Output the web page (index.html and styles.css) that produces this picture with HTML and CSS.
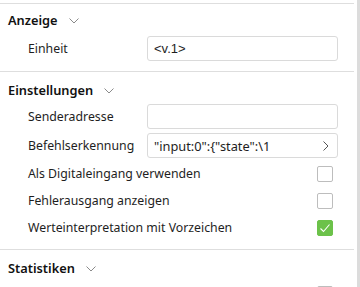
FILE: index.html
```html
<!DOCTYPE html>
<html>
<head>
<meta charset="utf-8">
<link rel="stylesheet" href="styles.css">
</head>
<body>
<div class="frame">
  <div class="panel">
    <section class="section first">
      <div class="head">Anzeige <svg class="chev" width="10" height="6" viewBox="0 0 10 6"><path d="M0.5 0.5 L5 5 L9.5 0.5" fill="none" stroke="#8a8a8a" stroke-width="1"/></svg></div>
      <div class="row field">
        <span class="label">Einheit</span>
        <div class="input mono">&lt;v.1&gt;</div>
      </div>
    </section>
    <section class="section">
      <div class="head">Einstellungen <svg class="chev" width="10" height="6" viewBox="0 0 10 6"><path d="M0.5 0.5 L5 5 L9.5 0.5" fill="none" stroke="#8a8a8a" stroke-width="1"/></svg></div>
      <div class="row field">
        <span class="label">Senderadresse</span>
        <div class="input"></div>
      </div>
      <div class="row field">
        <span class="label">Befehlserkennung</span>
        <div class="input arrow"><span class="val">"input:0":{"state":\1</span><svg width="6" height="10" viewBox="0 0 6 10"><path d="M0.5 0.5 L5 5 L0.5 9.5" fill="none" stroke="#555" stroke-width="1"/></svg></div>
      </div>
      <div class="row check">
        <span class="label">Als Digitaleingang verwenden</span>
        <span class="box"></span>
      </div>
      <div class="row check">
        <span class="label">Fehlerausgang anzeigen</span>
        <span class="box"></span>
      </div>
      <div class="row check">
        <span class="label">Werteinterpretation mit Vorzeichen</span>
        <span class="box on"><svg width="16" height="16" viewBox="0 0 16 16"><path d="M3.5 8.5 L6.5 11.5 L12.5 4.5" fill="none" stroke="#fff" stroke-width="1.1"/></svg></span>
      </div>
    </section>
    <section class="section">
      <div class="head">Statistiken <svg class="chev" width="10" height="6" viewBox="0 0 10 6"><path d="M0.5 0.5 L5 5 L9.5 0.5" fill="none" stroke="#8a8a8a" stroke-width="1"/></svg></div>
      <div class="row check">
        <span class="label"></span>
        <span class="box"></span>
      </div>
    </section>
  </div>
  <div class="scroll"></div>
</div>
</body>
</html>
```

FILE: styles.css
```css
html, body {
  margin: 0;
  padding: 0;
  background: #fff;
  overflow: hidden;
}
body {
  font-family: "Noto Sans", "Open Sans", sans-serif;
  font-size: 12.3px;
  color: #1e1e1e;
}
.frame {
  display: flex;
  height: 287px;
  overflow: hidden;
}
.panel {
  width: 357px;
  padding-top: 3px;
}
.scroll {
  width: 3px;
  background: #dcdcdc;
}
.section {
  border-top: 1px solid #dedede;
  padding-bottom: 8px;
  margin-right: 3px;
}
.head {
  display: flex;
  align-items: center;
  padding: 8px 0 2px 8px;
  height: 20px;
  font-weight: 600;
  font-size: 12.8px;
  color: #111;
}
.section.first .head {
  padding-top: 6px;
  padding-bottom: 4px;
}
.chev {
  margin-left: 11px;
  margin-top: 1px;
}
.row {
  display: flex;
  align-items: center;
  padding-left: 28px;
  padding-right: 16px;
}
.row.field {
  height: 29px;
}
.row.check {
  height: 27px;
}
.label {
  flex: 1;
  white-space: nowrap;
}
.input {
  box-sizing: border-box;
  width: 191px;
  height: 25px;
  border: 1px solid #dadada;
  border-radius: 3px;
  display: flex;
  align-items: center;
  padding: 0 6px;
  white-space: nowrap;
  overflow: hidden;
}
.input.mono {
  font-family: "Liberation Sans", Arial, sans-serif;
  font-size: 13px;
}
.input.arrow {
  justify-content: space-between;
  padding-right: 8px;
  font-size: 12.8px;
}
.input .val {
  overflow: hidden;
}
.box {
  box-sizing: border-box;
  width: 16px;
  height: 16px;
  border: 1px solid #bdbdbd;
  border-radius: 2px;
  margin-right: 5px;
  display: block;
}
.box svg {
  display: block;
  margin: -1px;
}
.box.on {
  background: #6cc24a;
  border-color: #6cc24a;
}
```
